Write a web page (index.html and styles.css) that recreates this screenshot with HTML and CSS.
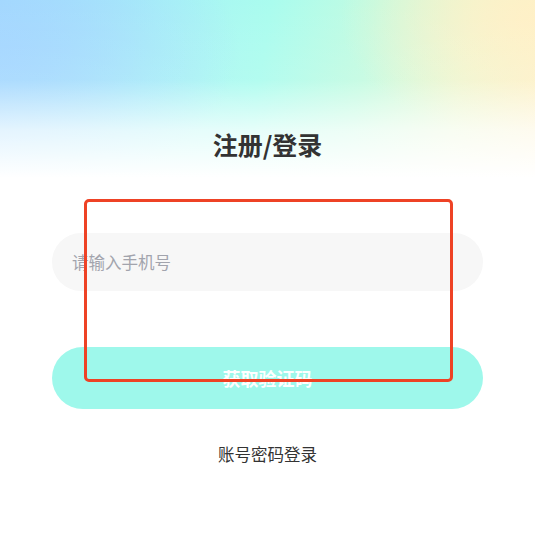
FILE: index.html
```html
<!DOCTYPE html>
<html lang="zh-CN">
<head>
<meta charset="utf-8">
<title>注册/登录</title>
<link rel="stylesheet" href="styles.css">
</head>
<body>
<div class="page">
  <h1 class="title">注册/登录</h1>
  <form class="form">
    <input class="phone" type="tel" placeholder="请输入手机号">
    <button class="submit" type="button">获取验证码</button>
  </form>
  <a class="alt-login" href="#">账号密码登录</a>
  <div class="highlight"></div>
</div>
</body>
</html>
```
FILE: styles.css
```css
html, body {
  margin: 0;
  padding: 0;
  background: #ffffff;
}

body {
  font-family: "Noto Sans CJK SC", "Noto Sans", sans-serif;
  color: #333333;
}

.page {
  position: relative;
  width: 535px;
  height: 545px;
  box-sizing: border-box;
  padding: 129px 52px 0;
  display: flex;
  flex-direction: column;
  align-items: stretch;
  background:
    linear-gradient(180deg, rgba(255,255,255,0) 0px, rgba(255,255,255,0.1) 80px, rgba(255,255,255,0.7) 130px, #ffffff 178px),
    radial-gradient(ellipse 240px 150px at 0px 50px, #a3d6ff 0%, rgba(163,214,255,0) 100%),
    radial-gradient(ellipse 200px 120px at 540px 20px, #fff0c6 0%, rgba(255,240,198,0) 100%),
    linear-gradient(100deg, #a6dbfd 0%, #a8f3f6 28%, #aafcee 48%, #c2fbe1 66%, #e9f8d3 84%, #fff1c8 100%);
  background-repeat: no-repeat;
  background-size: 100% 185px;
}

.title {
  margin: 0;
  height: 30px;
  line-height: 30px;
  font-size: 25px;
  font-weight: 700;
  text-align: center;
  color: #333333;
}

.form {
  display: flex;
  flex-direction: column;
  margin: 74px 0 0;
}

.phone {
  height: 58px;
  border: none;
  outline: none;
  border-radius: 29px;
  background: #f7f7f7;
  padding: 0 20px;
  font-family: inherit;
  font-size: 16.5px;
  color: #333333;
  box-sizing: border-box;
}

.phone::placeholder {
  color: #a2a4ad;
}

.submit {
  margin-top: 56px;
  height: 62px;
  border: none;
  border-radius: 31px;
  background: #9ef8eb;
  color: #ffffff;
  font-family: inherit;
  font-size: 18px;
  font-weight: 700;
  padding: 0;
}

.alt-login {
  margin-top: 33px;
  line-height: 24px;
  font-size: 16.5px;
  text-align: center;
  color: #333333;
  text-decoration: none;
}

.highlight {
  position: absolute;
  left: 84px;
  top: 199px;
  width: 369px;
  height: 183px;
  box-sizing: border-box;
  border: 3.5px solid #ee4225;
  border-radius: 5px;
  pointer-events: none;
}
```
